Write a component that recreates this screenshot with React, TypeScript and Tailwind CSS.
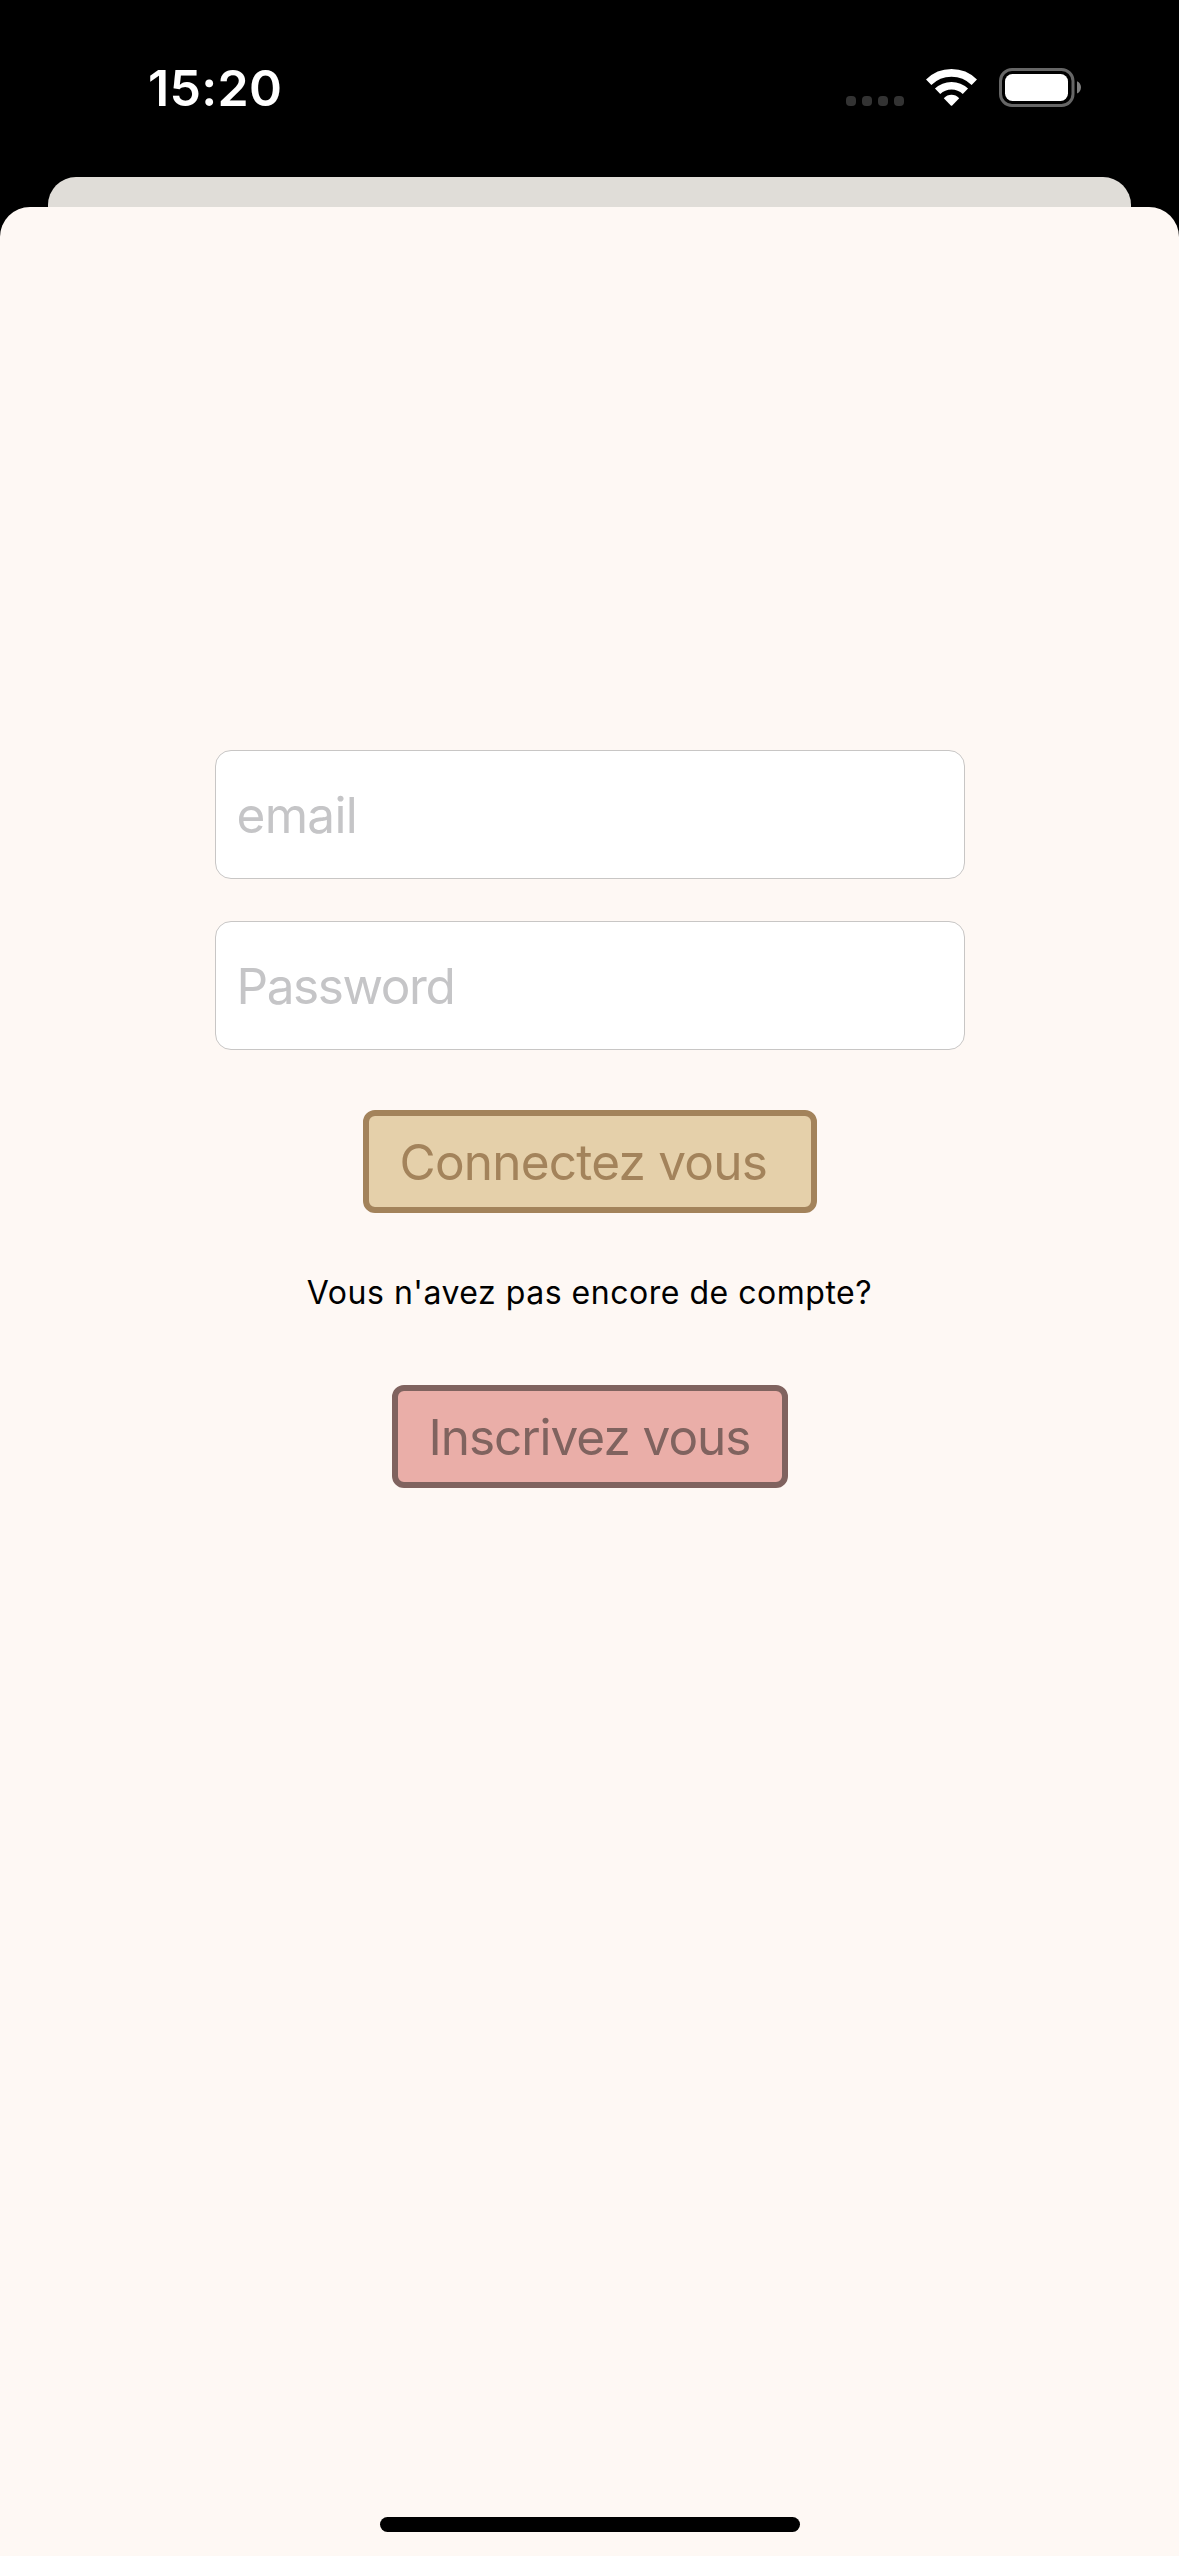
function StatusBar() {
  return (
    <header className="flex h-[177px] items-start bg-black pt-[58px] pl-[148px] text-white">
      <div className="h-[60px] w-[698px] text-[50px] font-semibold leading-[60px] tracking-[0.3px]">15:20</div>
      <div className="flex h-[60px] items-center">
        <svg width="240" height="60" viewBox="846 58 240 60" aria-hidden="true">
          <g fill="#333">
            <rect x="846" y="96" width="10" height="10" rx="4" />
            <rect x="862" y="96" width="10" height="10" rx="4" />
            <rect x="878" y="96" width="10" height="10" rx="4" />
            <rect x="894" y="96" width="10" height="10" rx="4" />
          </g>
          <g fill="none" stroke="#fff" strokeWidth="7.6">
            <path d="M928.7 82.2A32.5 32.5 0 0 1 974.3 82.2" />
            <path d="M937.6 91.3A20 20 0 0 1 965.4 91.3" />
          </g>
          <path d="M943.8 98.2C948 93.6 955 93.6 959.2 98.2L952.2 105.4Q951.5 106 950.8 105.4Z" fill="#fff" />
          <rect x="1000.5" y="69.5" width="72.5" height="36" rx="11.5" fill="none" stroke="#666" strokeWidth="3" />
          <rect x="1005" y="74" width="63" height="27" rx="7.5" fill="#fff" />
          <path d="M1077 81.3C1082.3 83.5 1082.3 91.3 1077 93.5Z" fill="#808080" />
        </svg>
      </div>
    </header>
  );
}

export default function App() {
  return (
    <div className="flex h-[2556px] w-[1179px] flex-col overflow-hidden bg-black font-['Inter',sans-serif]">
      <StatusBar />
      <div className="mx-auto h-[30px] w-[1083px] shrink-0 rounded-t-[28px] bg-[#e0ddd8]" />
      <main className="flex flex-1 flex-col items-center rounded-t-[30px] bg-[#fef8f4] pt-[543px]">
        <form className="flex w-[750px] flex-col gap-[42px]" onSubmit={(e) => e.preventDefault()}>
          <input
            type="email"
            placeholder="email"
            className="h-[129px] rounded-[16px] border border-[#c8c6c5] bg-white px-[21px] text-[49.5px] tracking-[-0.7px] outline-none placeholder:text-[#c5c5c7]"
          />
          <input
            type="password"
            placeholder="Password"
            className="h-[129px] rounded-[16px] border border-[#c8c6c5] bg-white px-[21px] text-[49.5px] tracking-[-1.4px] outline-none placeholder:text-[#c5c5c7]"
          />
        </form>
        <button className="mt-[60px] flex h-[103px] w-[454px] items-center rounded-[12px] border-[6px] border-[#a3835b] bg-[#e5d0aa] pt-px pl-[31px] text-[49.5px] tracking-[-0.78px] whitespace-nowrap text-[#a3835b]">
          Connectez vous
        </button>
        <p className="mt-[56px] h-[48px] text-[32px] leading-[48px] tracking-[0.52px] whitespace-nowrap text-black">
          Vous n'avez pas encore de compte?
        </p>
        <button className="mt-[68px] flex h-[103px] w-[396px] items-center rounded-[12px] border-[6px] border-[#80635f] bg-[#eaaea8] pt-px pl-[31px] text-[49.5px] tracking-[-1.05px] whitespace-nowrap text-[#80635f]">
          Inscrivez vous
        </button>
        <div className="mt-auto mb-[24px] h-[15px] w-[420px] rounded-full bg-black" />
      </main>
    </div>
  );
}
